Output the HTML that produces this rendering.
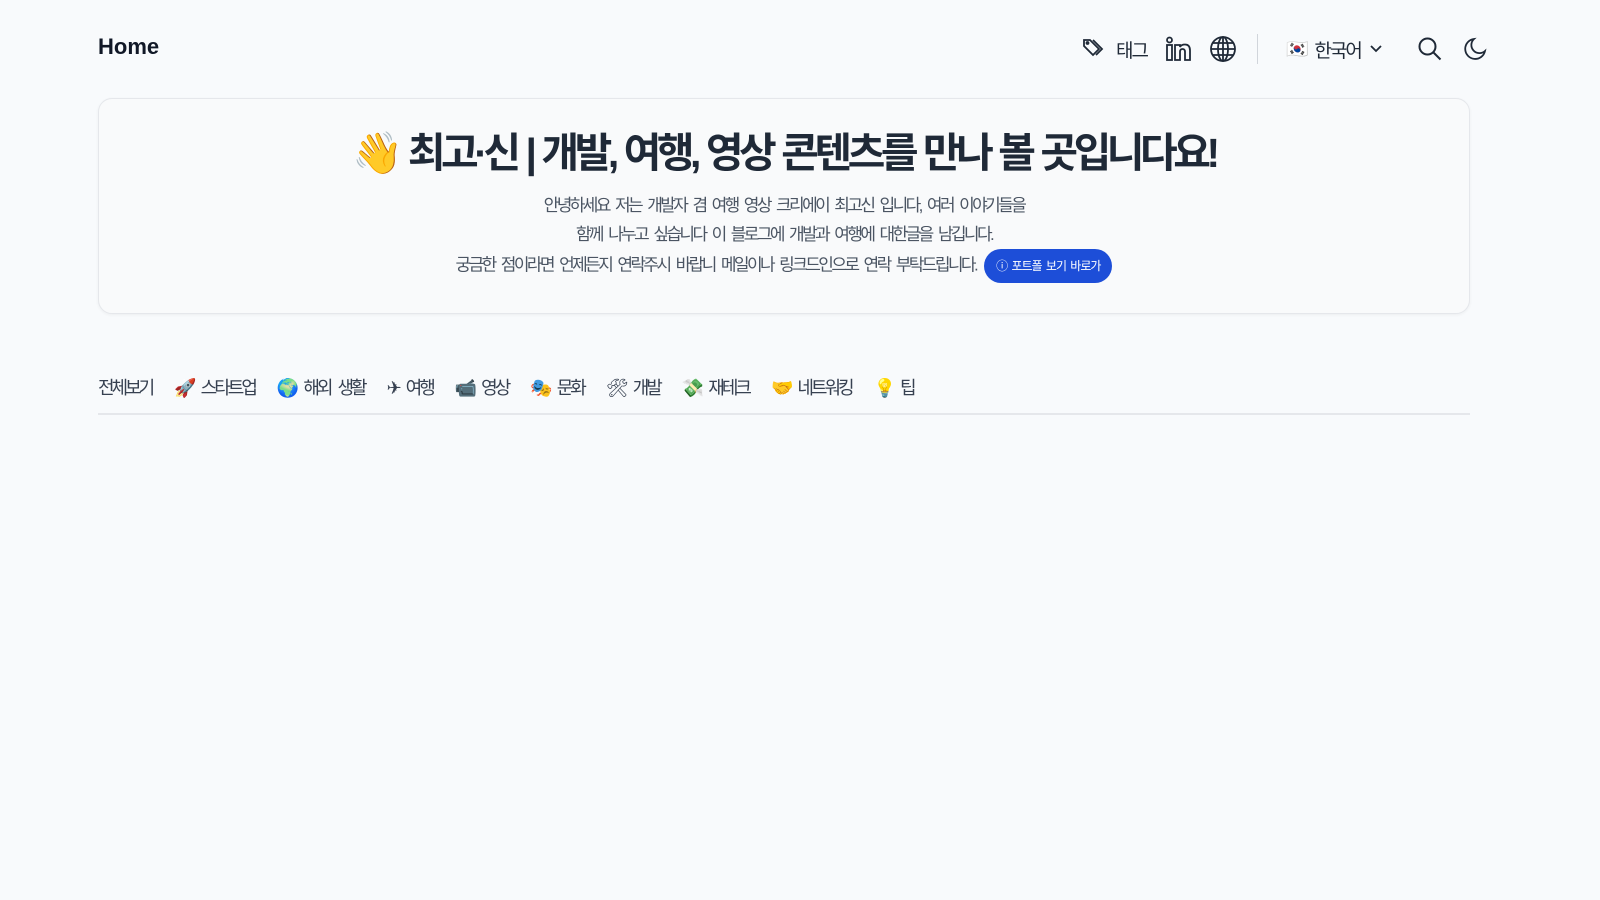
<!DOCTYPE html>
<html><head><meta charset="utf-8">
<style>
*{margin:0;padding:0;box-sizing:border-box}
body{width:1600px;height:900px;background:#f8fafc;font-family:"Liberation Sans","Noto Sans CJK KR",sans-serif;color:#111827;position:relative;overflow:hidden}
.home{position:absolute;left:98px;top:34px;font-size:22px;font-weight:bold}
.top{position:absolute;top:34px;height:30px;display:flex;align-items:center;font-size:19px;color:#1f2937;letter-spacing:-2px}
.card{position:absolute;left:98px;top:98px;width:1372px;height:216px;border:1px solid #e5e7eb;border-radius:14px;background:#f9fafb;box-shadow:0 1px 3px rgba(0,0,0,.05);text-align:center}
h1{font-size:41px;font-weight:bold;margin-top:24px;line-height:60px;color:#1f2937;letter-spacing:-4.5px;word-spacing:2px}
.p{font-size:17px;color:#4b5563;line-height:29px;letter-spacing:-2.6px;word-spacing:4px}
.btn{display:inline-flex;align-items:center;gap:4px;background:#1d4ed8;color:#fff;font-size:12px;border-radius:18px;padding:0 12px;height:34px;vertical-align:middle;margin-left:8px;letter-spacing:-1px;word-spacing:2px}
.nav{position:absolute;left:98px;top:374px;width:1372px;height:41px;border-bottom:2px solid #e5e7eb;font-size:18px;color:#374151;display:flex;gap:22px;letter-spacing:-3px;word-spacing:5px}
.nav span{white-space:nowrap}
</style></head><body>
<div class="home">Home</div>
<div class="top" style="left:1082px">
<svg width="26" height="24" viewBox="0 0 26 24" fill="none" stroke="#1f2937" stroke-width="1.8"><path d="M2 9V3h6l9 9-6 6z"/><circle cx="5.5" cy="6" r="1"/><path d="M11 3l9 9-6 6"/></svg>
<span style="margin-left:8px">태그</span>
<svg style="margin-left:18px" width="28" height="28" viewBox="0 0 28 28" fill="none" stroke="#1f2937" stroke-width="1.8"><rect x="2" y="10" width="5" height="15"/><circle cx="4.5" cy="5" r="2.5"/><path d="M10 25V10h5v2c1-2 3-2.5 5-2.5 4 0 5 3 5 6V25h-5v-8c0-2-1-3-2.5-3S15 15 15 17v8z"/></svg>
<svg style="margin-left:16px" width="28" height="28" viewBox="0 0 28 28" fill="none" stroke="#1f2937" stroke-width="1.8"><circle cx="14" cy="14" r="12"/><ellipse cx="14" cy="14" rx="5" ry="12"/><path d="M2 14h24M4 8h20M4 20h20M14 2v24"/></svg>
<div style="width:1px;height:30px;background:#d1d5db;margin-left:20px"></div>
<span style="margin-left:28px;font-size:18px">🇰🇷</span><span style="margin-left:8px">한국어</span>
<svg style="margin-left:8px" width="14" height="10" viewBox="0 0 14 10" fill="none" stroke="#1f2937" stroke-width="1.8"><path d="M2 2l5 5 5-5"/></svg>
<svg style="margin-left:34px" width="26" height="26" viewBox="0 0 26 26" fill="none" stroke="#1f2937" stroke-width="2"><circle cx="10.5" cy="10.5" r="8"/><path d="M16.5 16.5l7 7"/></svg>
<svg style="margin-left:18px" width="26" height="26" viewBox="0 0 26 26" fill="none" stroke="#1f2937" stroke-width="1.8"><path d="M13 3a10 10 0 1 0 11 12A8 8 0 0 1 13 3z"/></svg>
</div>
<div class="card">
<h1>👋 최고·신 | 개발, 여행, 영상 콘텐츠를 만나 볼 곳입니다요!</h1>
<div class="p" style="margin-top:8px">안녕하세요 저는 개발자 겸 여행 영상 크리에이 최고신 입니다, 여러 이야기들을</div>
<div class="p">함께 나누고 싶습니다 이 블로그에 개발과 여행에 대한글을 남깁니다.</div>
<div class="p">궁금한 점이라면 언제든지 연락주시 바랍니 메일이나 링크드인으로 연락 부탁드립니다.<span class="btn">ⓘ 포트폴 보기 바로가</span></div>
</div>
<div class="nav">
<span>전체보기</span><span>🚀 스타트업</span><span>🌍 해외 생활</span><span>✈ 여행</span><span>📹 영상</span><span>🎭 문화</span><span>🛠 개발</span><span>💸 재테크</span><span>🤝 네트워킹</span><span>💡 팁</span>
</div>
</body></html>
